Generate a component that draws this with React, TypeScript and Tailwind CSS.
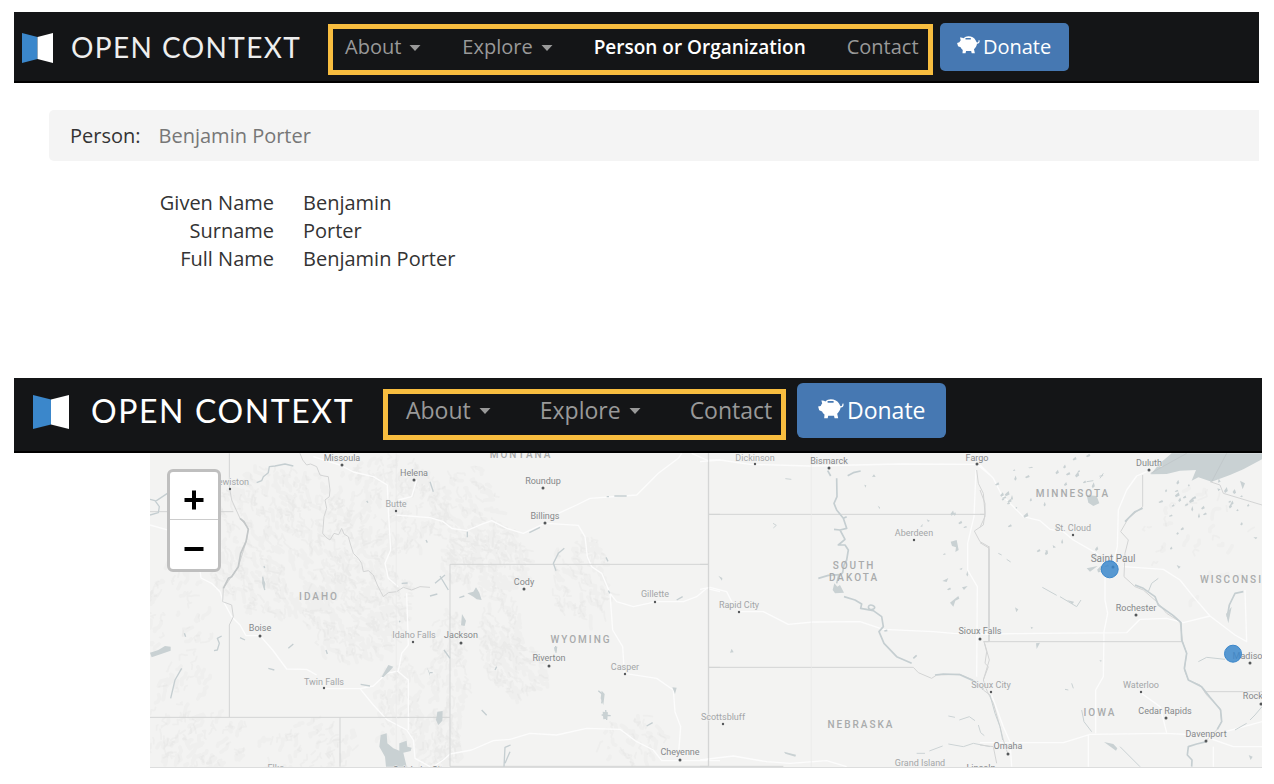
import React from "react";
import clsx from "clsx";

type Place = {
  name: string;
  x: number;
  y: number;
  tone: "strong" | "soft";
  dot?: [number, number];
  large?: boolean;
};

const places: Place[] = [
  { name: "Missoula", x: 192, y: 8, tone: "strong", dot: [192, 12] },
  { name: "Helena", x: 264, y: 23, tone: "strong", dot: [264, 27] },
  { name: "Butte", x: 246, y: 54, tone: "soft", dot: [246, 58] },
  { name: "Lewiston", x: 81, y: 32, tone: "soft", dot: [80, 36] },
  { name: "Boise", x: 110, y: 178, tone: "strong", dot: [110, 183] },
  { name: "Idaho Falls", x: 264, y: 185, tone: "soft", dot: [263, 189] },
  { name: "Twin Falls", x: 174, y: 232, tone: "soft", dot: [174, 235] },
  { name: "Elko", x: 126, y: 318, tone: "soft" },
  { name: "Salt Lake City", x: 270, y: 320, tone: "strong" },
  { name: "Roundup", x: 393, y: 31, tone: "strong", dot: [393, 35] },
  { name: "Billings", x: 395, y: 66, tone: "strong", dot: [395, 70] },
  { name: "Cody", x: 374, y: 132, tone: "strong", dot: [374, 136] },
  { name: "Jackson", x: 311, y: 185, tone: "strong", dot: [311, 190] },
  { name: "Riverton", x: 399, y: 208, tone: "strong", dot: [399, 213] },
  { name: "Casper", x: 475, y: 217, tone: "soft", dot: [475, 221] },
  { name: "Gillette", x: 505, y: 144, tone: "soft", dot: [505, 149] },
  { name: "Cheyenne", x: 530, y: 302, tone: "strong", dot: [530, 307] },
  { name: "Dickinson", x: 605, y: 8, tone: "soft", dot: [605, 11] },
  { name: "Bismarck", x: 679, y: 11, tone: "strong", dot: [679, 15] },
  { name: "Fargo", x: 827, y: 8, tone: "strong", dot: [827, 11] },
  { name: "Aberdeen", x: 764, y: 83, tone: "soft", dot: [764, 87] },
  { name: "Rapid City", x: 589, y: 155, tone: "soft", dot: [589, 159] },
  { name: "Sioux Falls", x: 830, y: 181, tone: "strong", dot: [830, 186] },
  { name: "Sioux City", x: 841, y: 235, tone: "soft", dot: [841, 239] },
  { name: "Scottsbluff", x: 573, y: 267, tone: "soft", dot: [573, 271] },
  { name: "Grand Island", x: 770, y: 313, tone: "soft" },
  { name: "Lincoln", x: 831, y: 318, tone: "strong" },
  { name: "Duluth", x: 999, y: 13, tone: "strong", dot: [999, 17] },
  { name: "St. Cloud", x: 923, y: 78, tone: "soft", dot: [923, 82] },
  { name: "Saint Paul", x: 963, y: 109, tone: "strong", dot: [963, 114], large: true },
  { name: "Rochester", x: 986, y: 158, tone: "strong", dot: [986, 162] },
  { name: "Madison", x: 1100, y: 206, tone: "strong", dot: [1100, 210] },
  { name: "Waterloo", x: 991, y: 235, tone: "soft", dot: [991, 239] },
  { name: "Cedar Rapids", x: 1015, y: 261, tone: "strong", dot: [1016, 265] },
  { name: "Rockford", x: 1111, y: 246, tone: "strong", dot: [1111, 251] },
  { name: "Davenport", x: 1056, y: 284, tone: "strong", dot: [1056, 288] },
  { name: "Omaha", x: 858, y: 296, tone: "strong", dot: [858, 301] },
];

const states = [
  { name: "MONTANA", x: 371, y: 5 },
  { name: "IDAHO", x: 169, y: 147 },
  { name: "WYOMING", x: 431, y: 190 },
  { name: "SOUTH", x: 704, y: 116 },
  { name: "DAKOTA", x: 704, y: 128 },
  { name: "NEBRASKA", x: 711, y: 275 },
  { name: "MINNESOTA", x: 923, y: 44 },
  { name: "WISCONSIN", x: 1086, y: 130 },
  { name: "IOWA", x: 950, y: 263 },
];

// areas of relief: centre, radii, number of ridges, main slope in degrees
const ranges = [
  [125, 85, 75, 75, 170, 60],
  [205, 150, 55, 55, 150, 50],
  [240, 50, 60, 50, 100, 110],
  [30, 190, 35, 90, 40, 120],
  [50, 285, 55, 30, 40, 115],
  [160, 290, 50, 28, 30, 120],
  [315, 60, 35, 50, 50, 40],
  [335, 105, 45, 30, 80, 45],
  [350, 180, 22, 45, 45, 70],
  [365, 215, 28, 28, 40, 50],
  [430, 125, 30, 45, 45, 55],
  [300, 215, 18, 60, 50, 95],
  [290, 285, 22, 30, 40, 95],
  [250, 250, 22, 50, 36, 95],
  [480, 285, 32, 26, 20, 60],
  [1050, 90, 60, 60, 14, 130],
];

// lakes scattered over an area: centre, radii, number
const lakeFields = [
  [865, 30, 20, 26, 12],
  [925, 25, 30, 25, 12],
  [885, 75, 30, 30, 8],
  [1030, 65, 24, 36, 18],
  [1070, 55, 36, 24, 12],
  [805, 100, 14, 45, 7],
  [940, 110, 16, 16, 6],
];

const seeded = (seed: number) => () => {
  seed = (seed * 16807) % 2147483647;
  return seed / 2147483647;
};

const ridgePath = (seed: number, spread: number) => {
  const next = seeded(seed);
  let d = "";
  ranges.forEach(([cx, cy, rx, ry, count, slope]) => {
    for (let i = 0; i < count; i++) {
      const turn = next() * Math.PI * 2;
      const reach = Math.sqrt(next());
      let x = cx + Math.cos(turn) * reach * rx;
      let y = cy + Math.sin(turn) * reach * ry;
      d += `M${x.toFixed(1)} ${y.toFixed(1)}`;
      const steps = 2 + Math.floor(next() * 3);
      for (let s = 0; s < steps; s++) {
        const a = ((slope + (next() - 0.5) * spread) * Math.PI) / 180;
        x += Math.cos(a) * (1 + next() * 4);
        y += Math.sin(a) * (1 + next() * 4);
        d += `L${x.toFixed(1)} ${y.toFixed(1)}`;
      }
    }
  });
  return d;
};

const lakePath = () => {
  const next = seeded(90210);
  let d = "";
  lakeFields.forEach(([cx, cy, rx, ry, count]) => {
    for (let i = 0; i < count; i++) {
      const turn = next() * Math.PI * 2;
      const reach = Math.sqrt(next());
      const x = cx + Math.cos(turn) * reach * rx;
      const y = cy + Math.sin(turn) * reach * ry;
      const w = 1 + next() * 3;
      const h = 1 + next() * 3;
      d += `M${x.toFixed(1)} ${y.toFixed(1)}l${w.toFixed(1)} ${(-h).toFixed(1)}l1 ${h.toFixed(1)}l${(-w).toFixed(1)} ${(h / 2).toFixed(1)}z`;
    }
  });
  return d;
};

const broadRidges = ridgePath(4711, 110);
const fineRidges = ridgePath(1234, 150);
const lakes = lakePath();

const BookLogo: React.FC<{ className: string }> = ({ className }) => (
  <svg viewBox="0 0 36 34" className={className} aria-hidden="true" preserveAspectRatio="none">
    <path d="M0 0L18 4.500V29.500L0 34Z" fill="#3b87cb" />
    <path d="M18 4.500L36 0V34L18 29.500Z" fill="#fff" />
  </svg>
);

const Caret = () => (
  <svg viewBox="0 0 12 6" className="mt-0.5 h-1.5 w-3" aria-hidden="true">
    <path d="M0.500 0H11.500L6 6Z" fill="currentColor" />
  </svg>
);

const PiggyBank: React.FC<{ className: string }> = ({ className }) => (
  <svg viewBox="0 0 26 20" className={className} aria-hidden="true">
    <path
      fill="currentColor"
      fillRule="evenodd"
      d="M3.400 1.500C4.800 1.300 6.400 1.600 7.400 2.500C8.800 1 10.800 0.200 12.800 0.200C16.500 0.200 19.500 1.800 21.200 4.800C21.800 5.900 22 6.800 22.700 7.200C23.800 7.400 24.600 6.300 24.300 4.700L25.500 4.500C26 7 24.800 8.700 22.600 8.600C22.300 11 21 13.100 19.200 14.700L20.200 19.200H16.600L16 16.800H10.200L9.700 19.200H6.200L6.500 15.600C5.400 14.800 4.500 13.800 4.100 12.600L1.200 11.300L0.100 7.600L2.700 7C3.100 6 3.600 5.300 4.200 4.600ZM9.600 2V3.700H15.600V2Z"
    />
  </svg>
);

const navLink = "flex items-center gap-2 text-[#999]";

const PersonHeader = () => (
  <header className="mr-[3px] flex h-[71px] items-start border-b-2 border-black bg-[#141517]">
    <a href="#home" className="mt-[21px] flex w-[314px] shrink-0 items-start gap-[18px] pl-2 text-[#eee]">
      <BookLogo className="h-[30px] w-[31px]" />
      <span className="font-['Lato'] text-[28px] leading-7 tracking-wider whitespace-nowrap">OPEN CONTEXT</span>
    </a>
    <nav className="mt-3 flex h-[51px] shrink-0 items-start gap-[41px] border-[5px] border-[#f8bd3f] pt-1 pr-[9px] pl-3 text-[20px] leading-7 whitespace-nowrap">
      <button type="button" className={navLink}>
        About <Caret />
      </button>
      <button type="button" className={navLink}>
        Explore <Caret />
      </button>
      <a href="#person" className="text-[19px] font-semibold text-white">
        Person or Organization
      </a>
      <a href="#contact" className={navLink}>
        Contact
      </a>
    </nav>
    <button
      type="button"
      className="mt-[11px] ml-[7px] flex h-12 w-[129px] shrink-0 items-center justify-center gap-[3px] rounded-[5px] bg-[#4678b2] text-[20px] font-medium text-white"
    >
      <PiggyBank className="mb-1 h-[18px] w-[23px]" />
      Donate
    </button>
  </header>
);

const MapHeader = () => (
  <header className="flex h-[75px] items-start border-b-2 border-black bg-[#141517]">
    <a href="#home" className="mt-[17px] flex w-[369px] shrink-0 items-start gap-[22px] pl-[19px] text-white">
      <BookLogo className="h-[34px] w-9" />
      <span className="font-['Lato'] text-[32px] leading-8 tracking-wider whitespace-nowrap">OPEN CONTEXT</span>
    </a>
    <nav className="mt-[11px] flex h-[51px] shrink-0 items-start gap-[49px] border-[5px] border-[#f8bd3f] pr-[9px] pl-[18px] text-[23px] leading-8 whitespace-nowrap">
      <button type="button" className={navLink}>
        About <Caret />
      </button>
      <button type="button" className={navLink}>
        Explore <Caret />
      </button>
      <a href="#contact" className={navLink}>
        Contact
      </a>
    </nav>
    <button
      type="button"
      className="mt-[5px] ml-[11px] flex h-[55px] w-[149px] shrink-0 items-center justify-center gap-[3px] rounded-md bg-[#4678b2] text-[23px] font-medium text-white"
    >
      <PiggyBank className="mb-1 h-5 w-[26px]" />
      Donate
    </button>
  </header>
);

const PersonDetails = () => {
  const fields = [
    { label: "Given Name", value: "Benjamin" },
    { label: "Surname", value: "Porter" },
    { label: "Full Name", value: "Benjamin Porter" },
  ];

  return (
    <main className="mt-[27px] mr-[3px] ml-[35px] text-[20px] leading-7 text-[#333]">
      <div className="flex h-[51px] items-center gap-[18px] rounded-l-[5px] bg-[#f4f4f4] pl-[21px]">
        <span>Person:</span>
        <span className="text-[#777]">Benjamin Porter</span>
      </div>
      <dl className="mt-7 grid grid-cols-[225px_1fr] gap-x-[29px]">
        {fields.map((field) => (
          <React.Fragment key={field.label}>
            <dt className="text-right">{field.label}</dt>
            <dd>{field.value}</dd>
          </React.Fragment>
        ))}
      </dl>
    </main>
  );
};

const MapDrawing = () => (
  <svg
    viewBox="0 0 1112 315"
    preserveAspectRatio="xMinYMin slice"
    className="block h-full w-full"
    role="img"
    aria-label="Map"
  >
    <rect width="1112" height="315" fill="#f3f3f2" />
    <g fill="none" stroke="#000" strokeLinejoin="round" strokeLinecap="round">
      <path d={broadRidges} strokeOpacity="0.014" strokeWidth="4" />
      <path d={fineRidges} strokeOpacity="0.020" strokeWidth="2" />
    </g>

    {/* west: Idaho and the Montana border */}
    <g transform="translate(-10 -3) scale(0.33333)" fill="none" strokeLinejoin="round">
      <path
        stroke="#fcfcfc"
        strokeWidth="4"
        d="M30 225L90 242M180 362L183 384L215 400L240 425L248 450L275 500L300 525L318 557H360L398 600L440 657L500 658L530 675M550 716H660L700 708L740 670L775 663L785 610L805 585L800 430M520 20L600 45L640 66L700 80L742 105L745 180L752 300L735 340L745 385L775 410M766 195L870 203M830 90L815 140L775 150M660 716L700 765L740 808L800 840L820 870L825 925L870 950M775 665L805 690V840"
      />
      <path
        stroke="#d3d4d4"
        strokeWidth="3"
        d="M268 10V110L275 150L300 205L325 235L320 270L295 350L250 415L248 455L275 465L280 500L268 525V802M30 802H870M600 802V950M30 185H280M480 10L488 30L500 45L512 42L530 50L540 75L552 78L565 80L570 120L568 140L555 150L560 175L552 200L548 250L558 262L570 270L582 250L596 254L605 235L612 252L625 260L632 285L640 310L655 325L665 340L670 365L685 362L700 375L712 405L730 440L745 428L770 425L790 412L815 420L840 410L870 412"
      />
      <path stroke="#c3c7c8" strokeWidth="5" d="M300 205L312 215L325 238L318 275L302 310L295 350L275 380L265 385L250 415" />
      <path stroke="#e8e8e8" strokeWidth="2" d="M769 10V950" />
      <path
        stroke="#c5ced1"
        strokeWidth="4"
        d="M350 98L365 92L370 80L385 68L388 50L405 48L435 42L460 48M30 148L45 152L58 170L55 188L30 195M45 155L90 125M372 348L374 354M368 380L374 420M300 563L315 570M385 655L403 660M662 703L690 708M445 595L460 582M558 600L562 612M245 558L232 565L238 580L232 600L222 602M133 550L137 560M780 512L778 517M785 400L803 399M858 270L862 278M680 153L684 158M125 655L105 690L92 745"
      />
      <path
        fill="#c9d1d3"
        d="M30 608L55 600L75 588L92 590L92 602L70 610L35 622ZM725 680L745 645L760 650L750 662L730 682ZM722 855L740 850L742 880L760 895L778 902V880L800 872L802 890L815 893L812 903L790 908L800 950H738L735 920L718 890ZM368 380L376 400L374 422L366 400ZM860 650L870 670V678Z"
      />
    </g>

    {/* Wyoming and eastern Montana */}
    <g transform="translate(280 -3) scale(0.33333)" fill="none" strokeLinejoin="round">
      <path
        stroke="#fcfcfc"
        strokeWidth="4"
        d="M0 203L40 215L65 235L110 242L150 225L185 212L230 235L280 250L340 222M385 190L440 165L480 145L620 135L685 70L745 25L755 10M350 220L445 226L465 260L472 320L485 350L515 370L540 430L560 455L610 470L655 460L675 455H760L800 440L830 415L870 425M540 430L548 540L578 590L583 670L680 685L730 720L735 785L752 830L745 920M60 912L125 900L190 872L240 868L300 850L380 855L470 835L570 838L620 875L670 900L695 932H870M60 912L40 930L10 950M785 10L830 30H870"
      />
      <path stroke="#d3d4d4" strokeWidth="3" d="M60 950V343H835M835 10V950M835 193H870M835 652H870M60 949H835M0 802H60" />
      <path
        stroke="#c5ced1"
        strokeWidth="4"
        d="M403 295L385 310L370 340L378 362M0 95L10 125M0 438L22 432M15 400L45 375M30 378L55 420M42 600L60 625M88 443L103 438M298 248L330 232M528 322L534 334M535 422L540 430M195 660L200 650M155 780L170 796M650 828L668 818M740 450L758 440M505 722L520 735L515 760M515 795L542 797M527 780L530 810M377 588L378 608M222 950L225 892L242 885M225 940L240 905M530 140H537M553 138H590M0 668H8M112 245V262"
      />
      <path
        fill="#c9d1d3"
        d="M112 430L130 425L138 412L148 428L155 450L140 448L130 440ZM96 492L108 512L104 528L93 526ZM22 785L38 783L37 812L25 825L18 810ZM727 712L740 713L735 732ZM515 722L524 732L520 765L512 745ZM518 785L534 787L532 806L520 808ZM372 592L382 590L380 604L374 604Z"
      />
    </g>

    {/* the Dakotas and Nebraska */}
    <g transform="translate(550 -3) scale(0.33333)" fill="none" strokeLinejoin="round">
      <path
        stroke="#fcfcfc"
        strokeWidth="4"
        d="M0 35L60 30L150 43L330 48L600 42L830 43L870 75M0 418L30 412L80 425L95 455L120 485H190L265 523L340 516L480 515L550 538L700 545L760 550L870 552M828 60L822 200L803 280V360L832 410L830 680M0 930L100 918L200 935L270 940L380 932L440 950"
      />
      <path
        stroke="#d3d4d4"
        strokeWidth="3"
        d="M26 10V950M26 193H855M26 652H640M0 343H26M0 949H250M640 652L655 668L695 685L710 675L780 673L820 690L850 720L870 735M830 60L835 100L850 130L855 190L850 225L823 243L840 275L870 292M866 290V575H852L860 605L855 640L865 650L850 690"
      />
      <path stroke="#eaeaea" strokeWidth="2" d="M334 10V950" />
      <path
        stroke="#c5ced1"
        strokeWidth="5"
        d="M383 62L392 78M410 85L411 140L402 160L410 180L430 205L440 235L420 240L402 238M420 240L435 268L415 285H435L445 300L440 330L432 345L428 368L415 380L410 400M355 385L385 376L420 374M432 440L465 450L485 462L482 475L520 482L545 500L550 530L537 545L552 580L590 620L635 640M640 625L650 616M443 77L460 68L482 63M430 205L440 200M505 470C510 460 530 468 522 476C515 482 505 478 505 470M553 543L562 541"
      />
      <path stroke="#c5ced1" strokeWidth="5" d="M705 675L730 672L780 674L820 692L850 718" />
      <path
        stroke="#ccd3d5"
        strokeWidth="3"
        d="M650 910H675M688 903L728 888M745 882L790 890L820 880L870 890M745 798L765 802M778 810L808 800L825 812M835 825L842 848L853 857M256 86L274 88M219 220L229 226L220 234"
      />
      <path
        fill="#c9d1d3"
        d="M403 400L412 410L420 405L432 428L405 430L398 420ZM252 905L288 914L286 920L256 911ZM90 608L95 596L101 607ZM55 377L67 384L66 392ZM752 275L770 270L776 300L766 306L768 292L756 288ZM727 393L745 384L740 396ZM786 412L803 408L792 420ZM750 458L775 438L778 446L766 452L760 470ZM516 80L522 73L527 81ZM493 104L499 106L496 113ZM533 167L540 172L539 178ZM680 208L690 212L684 216ZM661 230L668 221L667 230ZM778 357L788 353L784 360Z"
      />
    </g>

    {/* Minnesota, Iowa and Wisconsin */}
    <g transform="translate(830 -3) scale(0.33333)" fill="none" strokeLinejoin="round">
      <path
        stroke="#fcfcfc"
        strokeWidth="4"
        d="M0 45L40 85L65 135L130 200L180 212L210 238L250 245L280 270L350 310L380 345M500 65L470 78L440 120L415 180L412 290L400 340M430 350L550 358L600 390L640 440L690 498L765 555L800 575L795 420M375 370V450L383 490L372 545L370 680L347 720V850M0 552L440 548L480 508L560 505L610 518L690 498M0 878H250L330 853L555 850L660 855L760 890H846M480 727L540 770L560 848M325 853V950M35 735L70 830L90 875L95 950M700 890V950M700 855L846 815"
      />
      <path
        stroke="#d3d4d4"
        strokeWidth="3"
        d="M0 278L28 295V575M10 575H606M488 75V170L445 205L422 245L445 270L435 310L432 380L465 410L490 420L530 455L560 490L600 515L608 575L620 610L613 660L625 690L660 705L680 735L720 775L725 815L710 840L680 870M672 725H846M690 95L720 105L730 130L846 165M14 580L28 630L10 690L22 725L40 760L60 830L70 870L83 910M0 120L15 160V200L0 232M0 193H15M0 885L40 890L50 940"
      />
      <path
        stroke="#c5ced1"
        strokeWidth="5"
        d="M465 405L490 415L525 440L535 465L580 497L603 518L605 570L620 610L613 655L625 690L665 710L690 742L722 780L725 815L712 838M680 875L650 882L625 890L622 915L636 930L635 950M435 215L465 185L488 175M790 425L765 430L748 465L742 500"
      />
      <path
        stroke="#c9d1d3"
        strokeWidth="3"
        d="M187 412L230 436M240 440L290 470L303 450M655 635L680 622L735 628M305 780L312 815L335 845M30 735L45 790L60 830L68 870M846 770L825 795L810 810M800 820L765 840M420 890L480 950M275 700L280 715M255 718L265 720M320 95L340 92M370 70L360 85M55 310L65 315M80 328L92 336M505 425L515 400L535 385"
      />
      <path
        fill="#c9d1d3"
        d="M512 73L540 40L575 10H846V28L790 58L750 75L695 95L655 82L635 92L648 60L600 62L560 72ZM320 135L350 138L358 160L340 168L325 158ZM260 450L282 455L278 462ZM372 876L400 882L412 895L408 902ZM738 492L755 470L745 520ZM105 472L115 478L109 487ZM168 580L180 578L170 597ZM196 300L204 304L198 306ZM590 345L602 350L596 356ZM712 115L722 118L715 124ZM780 92L795 100L788 118ZM320 355L353 348L330 365ZM107 170L112 172L108 178ZM152 530L160 533L154 537ZM358 630L366 632L362 635ZM806 915L818 920L812 930ZM218 285L228 292L220 294ZM820 262L832 262L828 268ZM716 85L722 95L714 98Z"
      />
      <path stroke="#bdc3c5" strokeWidth="2" d="M620 10L512 70M740 10L695 95" />
    </g>

    <path d={lakes} fill="#c9d1d3" />

    <g fontFamily="Roboto, sans-serif" textAnchor="middle">
      {states.map((state) => (
        <text key={state.name} x={state.x} y={state.y} fill="#a9abac" className="text-[10px] font-medium tracking-[2px]">
          {state.name}
        </text>
      ))}
      {places.map((place) => (
        <g key={place.name}>
          <text
            x={place.x}
            y={place.y}
            className={clsx(
              place.large ? "text-[10px]" : "text-[9px]",
              place.tone === "strong" ? "fill-[#85888a]" : "fill-[#a3a6a8]"
            )}
            stroke="#f3f3f2"
            strokeWidth="1"
            paintOrder="stroke"
          >
            {place.name}
          </text>
          {place.dot && (
            <circle cx={place.dot[0]} cy={place.dot[1]} r={place.tone === "strong" ? 1.5 : 1.2} fill="#55585a" />
          )}
        </g>
      ))}
    </g>

    <g fill="#3b87cb" fillOpacity="0.850" stroke="#3b87cb" strokeWidth="1">
      <circle cx="959.700" cy="116.300" r="8.500" />
      <circle cx="1083" cy="200.700" r="8.500" />
    </g>
    <path d="M0 314.500H1112" stroke="#dcdddd" />
  </svg>
);

const MapView = () => (
  <section className="relative ml-[136px] h-[315px] overflow-hidden bg-[#f3f3f2]">
    <MapDrawing />
    <div className="absolute top-4 left-[17px] w-[54px] rounded-md border-[3px] border-[#bfbfbf] bg-white">
      <button
        type="button"
        aria-label="Zoom in"
        className="flex h-12 w-full items-center justify-center border-b border-[#ccc] pt-2"
      >
        <svg viewBox="0 0 20 20" className="size-5" aria-hidden="true">
          <path d="M10 0.500V19.500M0.500 10H19.500" stroke="#000" strokeWidth="4" />
        </svg>
      </button>
      <button type="button" aria-label="Zoom out" className="flex h-[49px] w-full items-center justify-center pt-2">
        <svg viewBox="0 0 20 20" className="size-5" aria-hidden="true">
          <path d="M0.500 10H19.500" stroke="#000" strokeWidth="4" />
        </svg>
      </button>
    </div>
  </section>
);

const App: React.FC = () => {
  return (
    <div className="min-h-screen overflow-hidden bg-white pt-3 pr-3 pb-4 pl-3.5 font-['Open_Sans',sans-serif]">
      <PersonHeader />
      <PersonDetails />
      <div className="mt-[105px]">
        <MapHeader />
        <MapView />
      </div>
    </div>
  );
};

export default App;
